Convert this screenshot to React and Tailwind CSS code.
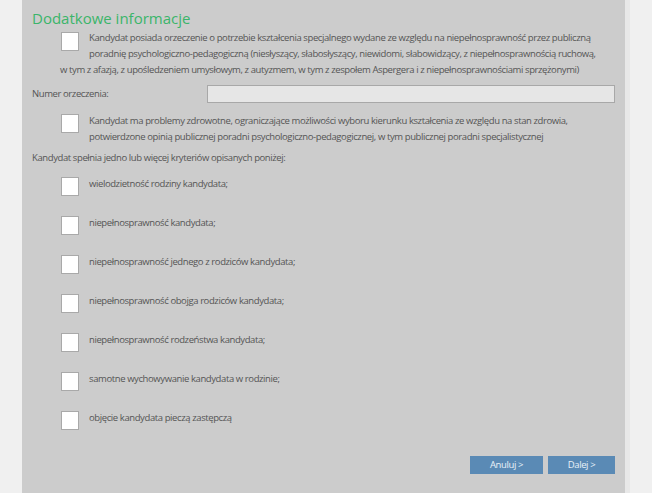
const criteria = [
  'wielodzietność rodziny kandydata;',
  'niepełnosprawność kandydata;',
  'niepełnosprawność jednego z rodziców kandydata;',
  'niepełnosprawność obojga rodziców kandydata;',
  'niepełnosprawność rodzeństwa kandydata;',
  'samotne wychowywanie kandydata w rodzinie;',
  'objęcie kandydata pieczą zastępczą',
];

function Box({ className = '' }) {
  return <span className={`block w-[18px] h-[19px] bg-white border border-[#a9a9a9] ${className}`} />;
}

export default function App() {
  return (
    <div className="flex w-[652px] h-[493px] bg-[#f0f0f0] overflow-hidden" style={{ fontFamily: '"Open Sans", sans-serif' }}>
      <div className="ml-[22px] w-[603px] shrink-0 h-[493px] bg-[#cccccc] px-[10px] pt-[8px] text-[#555555] text-[9.5px] tracking-[-0.4px]">
        <h1 className="text-[15px] leading-[20px] text-[#3bb56a] tracking-normal">Dodatkowe informacje</h1>

        <div className="ml-[28px] mt-[2px] leading-[16px] flow-root">
          <Box className="float-left ml-[1px] mt-[2px] mr-[10px] mb-[4px]" />
          Kandydat posiada orzeczenie o potrzebie kształcenia specjalnego wydane ze względu na niepełnosprawność przez publiczną poradnię psychologiczno-pedagogiczną (niesłyszący, słabosłyszący, niewidomi, słabowidzący, z niepełnosprawnością ruchową, w{'\u00a0'}tym z afazją, z upośledzeniem umysłowym, z autyzmem, w tym z zespołem Aspergera i z niepełnosprawnościami sprzężonymi)
        </div>

        <div className="flex items-center mt-[7px] h-[18px]">
          <span className="w-[175px]">Numer orzeczenia:</span>
          <input className="flex-1 h-[18px] bg-[#e6e6e6] border border-[#a8a8a8] outline-none" />
        </div>

        <div className="ml-[28px] mt-[10px] leading-[16px] flow-root">
          <Box className="float-left ml-[1px] mt-[1px] mr-[10px]" />
          Kandydat ma problemy zdrowotne, ograniczające możliwości wyboru kierunku kształcenia ze względu na stan zdrowia, potwierdzone opinią publicznej poradni psychologiczno-pedagogicznej, w tym publicznej poradni specjalistycznej
        </div>

        <p className="mt-[5px] leading-[16px]">Kandydat spełnia jedno lub więcej kryteriów opisanych poniżej:</p>

        <div className="mt-[11px] ml-[29px] flex flex-col gap-[20px]">
          {criteria.map((c) => (
            <label key={c} className="flex items-start h-[19px] leading-[12px]">
              <Box className="mr-[10px] shrink-0" />
              <span className="pt-[1px]">{c}</span>
            </label>
          ))}
        </div>

        <div className="flex justify-end gap-[5px] mt-[26px]">
          <button className="w-[73px] h-[18px] bg-[#5a8ab5] text-[#e9f1f8]">Anuluj &gt;</button>
          <button className="w-[67px] h-[18px] bg-[#5a8ab5] text-[#e9f1f8]">Dalej &gt;</button>
        </div>
      </div>
      <div className="w-[5px] h-[493px] bg-[#e8e8e8]" />
    </div>
  );
}
